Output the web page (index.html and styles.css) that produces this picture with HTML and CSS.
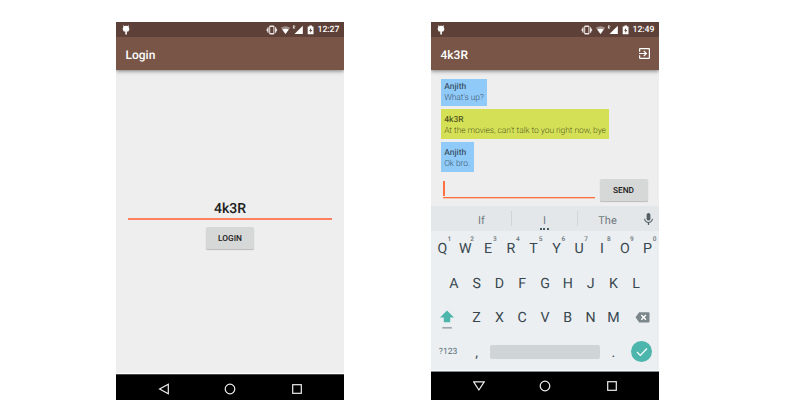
FILE: index.html
```html
<!DOCTYPE html>
<html lang="en">
<head>
<meta charset="utf-8">
<title>Chat</title>
<link rel="stylesheet" href="styles.css">
</head>
<body>
<svg width="0" height="0" class="defs">
  <symbol id="droid" viewBox="0 0 8 10"><path d="M1.200.2 2.300 1Q4 .4 5.700 1L6.800.2 7.100.5 6.500 1.800Q7.500 3 7.300 4.800L6.300 6.600H4.900V9.400H3.300V6.600H1.800L.8 4.800Q.5 3 1.500 1.800L.9.500Z" fill="#fff"/></symbol>
  <symbol id="status" viewBox="0 0 50 12">
    <g fill="#eee6e4"><rect x="3.200" y="1.500" width="5.200" height="9" rx="1"/><path d="M2.600 3.300V8.700H1.500V7.700L.2 6 1.500 4.300V3.300ZM9 3.300V8.700h1.100V7.700L11.400 6 10.100 4.300V3.300Z"/></g>
    <rect x="4.200" y="3" width="3.200" height="6" fill="#5d4037"/>
    <path d="M14.700 3.700Q19.500.7 24.300 3.700L19.500 10Z" fill="#a18f8a"/><path d="M16.300 5.500Q19.500 4 22.700 5.500L19.500 10Z" fill="#fff"/>
    <path d="M36.800 1.700V10H28.500Z" fill="#fff"/><path d="M27.400 4.700V1.700h1q1 .8 0 1.600h-1l1.500 1.400" fill="none" stroke="#fff" stroke-width=".7"/>
    <path d="M41.700 2.400h1.700V1.500h2.600v.9h1.500V10.300h-5.800Z" fill="#fff"/><path d="M45.200 3.700 43.100 6.700h1.300l-.3 2.200 2.200-3h-1.400Z" fill="#5d4037"/>
  </symbol>
</svg>
<main class="stage">
  <section class="phone">
    <div class="statusbar"><svg class="droid"><use href="#droid"/></svg><svg class="status"><use href="#status"/></svg><time>12:27</time></div>
    <header class="appbar"><h1>Login</h1></header>
    <div class="login">
      <div class="username">4k3R</div>
      <button class="btn">LOGIN</button>
    </div>
    <nav class="nav nav-low">
      <svg viewBox="0 0 12 12"><path d="M10.300 1.300V10.700L1.600 6Z"/></svg>
      <svg viewBox="0 0 12 12"><circle cx="6" cy="6" r="4.800"/></svg>
      <svg viewBox="0 0 12 12"><rect x="1.700" y="1.700" width="8.600" height="8.600"/></svg>
    </nav>
  </section>
  <section class="phone">
    <div class="statusbar"><svg class="droid"><use href="#droid"/></svg><svg class="status"><use href="#status"/></svg><time>12:49</time></div>
    <header class="appbar"><h1>4k3R</h1>
      <svg class="exit" viewBox="3 3 18 18"><path fill="#fff" d="M10.090 15.590 11.500 17l5-5-5-5-1.410 1.410L12.670 11H3v2h9.670l-2.580 2.590zM19 3H5c-1.110 0-2 .9-2 2v4h2V5h14v14H5v-4H3v4c0 1.100.89 2 2 2h14c1.100 0 2-.9 2-2V5c0-1.100-.9-2-2-2z"/></svg>
    </header>
    <div class="chat">
      <div class="msg first"><b>Anjith</b><p>What's up?</p></div>
      <div class="msg mine"><b>4k3R</b><p>At the movies, can't talk to you right now, bye</p></div>
      <div class="msg"><b>Anjith</b><p>Ok bro.</p></div>
      <div class="compose"><div class="field"><i class="caret"></i></div><button class="btn">SEND</button></div>
    </div>
    <div class="keyboard">
      <div class="suggest"><span>If</span><span class="mid">I<em></em></span><span>The</span>
        <svg class="mic" viewBox="5 2 14 19"><path fill="#546066" d="M12 14c1.660 0 3-1.340 3-3V5c0-1.660-1.340-3-3-3S9 3.340 9 5v6c0 1.660 1.340 3 3 3zm5.300-3c0 3-2.540 5.100-5.300 5.100S6.700 14 6.700 11H5c0 3.410 2.720 6.230 6 6.720V21h2v-3.280c3.280-.48 6-3.300 6-6.720h-1.700z"/></svg>
      </div>
      <div class="row"><kbd>Q<sup>1</sup></kbd><kbd>W<sup>2</sup></kbd><kbd>E<sup>3</sup></kbd><kbd>R<sup>4</sup></kbd><kbd>T<sup>5</sup></kbd><kbd>Y<sup>6</sup></kbd><kbd>U<sup>7</sup></kbd><kbd>I<sup>8</sup></kbd><kbd>O<sup>9</sup></kbd><kbd>P<sup>0</sup></kbd></div>
      <div class="row"><kbd>A</kbd><kbd>S</kbd><kbd>D</kbd><kbd>F</kbd><kbd>G</kbd><kbd>H</kbd><kbd>J</kbd><kbd>K</kbd><kbd>L</kbd></div>
      <div class="row">
        <span class="wide"><svg class="shift" viewBox="0 0 16 20"><path fill="#4db6ac" d="M8 .5 15 7.500H11.200V12.300H4.800V7.500H1Z"/><path fill="#8b979c" d="M3.300 17.200h9.600v1.300H3.300z"/></svg></span>
        <kbd>Z</kbd><kbd>X</kbd><kbd>C</kbd><kbd>V</kbd><kbd>B</kbd><kbd>N</kbd><kbd>M</kbd>
        <span class="wide"><svg class="back" viewBox="0 0 15 11"><path fill="#7b878c" d="M4.200.3H13.500q1 0 1 1V9.400q0 1-1 1H4.200L.5 5.350Z"/><path d="M6.300 2.900 10.900 7.700M10.900 2.900 6.300 7.700" stroke="#fff" stroke-width="1.400"/></svg></span>
      </div>
      <div class="row">
        <span class="wide sym">?123</span><kbd>,</kbd><span class="space"></span><kbd>.</kbd>
        <span class="wide"><span class="done"><svg viewBox="0 0 12 10"><path d="M1 5 4.300 8.300 11 1.500" fill="none" stroke="#fff" stroke-width="1.200"/></svg></span></span>
      </div>
    </div>
    <nav class="nav nav-kb">
      <svg viewBox="0 0 12 12"><path d="M.6 1.800H11.200L5.900 10Z"/></svg>
      <svg viewBox="0 0 12 12"><circle cx="6" cy="6" r="4.800"/></svg>
      <svg viewBox="0 0 12 12"><rect x="1.700" y="1.700" width="8.600" height="8.600"/></svg>
    </nav>
  </section>
</main>
</body>
</html>
```
FILE: styles.css
```css
* { box-sizing: border-box; }
body { margin: 0; background: #fff; font-family: Roboto, sans-serif; text-rendering: geometricPrecision; }
.defs { position: absolute; }
.stage { display: flex; gap: 87px; height: 400px; padding: 22px 0 0 116px; overflow: hidden; }
.phone { width: 228px; height: 378px; display: flex; flex-direction: column; background: #eee; }
.statusbar { height: 15px; background: #5d4037; display: flex; align-items: center; padding: 0 4.500px 0 6px; color: #fff; font-size: 8.700px; font-weight: 500; }
.droid { width: 8px; height: 10px; }
.status { width: 50px; height: 12px; margin-left: auto; }
.statusbar time { width: 23.500px; text-align: right; line-height: 15px; padding-top: 2px; white-space: nowrap; }
.appbar { height: 33px; background: #795548; display: flex; align-items: center; justify-content: space-between; padding: 0 9px 0 9.500px; box-shadow: 0 1px 4px rgba(0,0,0,.5); clip-path: inset(0 0 -6px 0); }
.appbar h1 { margin: 0; color: #fff; font-size: 12px; font-weight: 500; line-height: 34px; padding-top: 2px; }
.exit { width: 11px; height: 11px; }
.btn { width: 48px; height: 22px; border: 0; border-radius: 1.500px; padding: 2px 0 0; background: #d6d7d7; color: #202020; font: 500 8.300px/20px Roboto, sans-serif; text-rendering: geometricPrecision; box-shadow: 0 1px 1px rgba(0,0,0,.22); }
.login { flex: 1; display: flex; flex-direction: column; align-items: center; padding: 129px 12px 0; }
.username { width: 204px; height: 21px; border-bottom: 2px solid #ff8060; margin-bottom: 7px; padding-top: 1px; font-size: 14px; font-weight: 500; line-height: 19px; text-align: center; color: #202020; }
.nav { background: #000; display: flex; justify-content: center; align-items: center; gap: 54.500px; }
.nav svg { width: 12px; height: 12px; fill: none; stroke: #eee; stroke-width: 1.200; }
.nav-low { height: 26px; border-top: 1px solid #444a49; padding-top: 2px; box-shadow: 0 -1px #fcfcfc; }
.nav-kb { height: 29px; border-top: 1px solid #7f8a8d; box-shadow: 0 -1px #f8fafb; }
.chat { flex: 1; padding: 9px 9px 0 9.500px; display: flex; flex-direction: column; align-items: flex-start; gap: 3px; }
.msg { height: 30px; padding: 6px 3.700px 0; background: #90caf9; font-size: 8.500px; line-height: 11px; color: rgba(0,0,0,.66); white-space: nowrap; }
.msg.first { height: 27px; padding-top: 3px; }
.msg.mine { width: 168.500px; background: #d4e157; }
.msg b { display: block; font-weight: 500; color: rgba(0,0,0,.64); }
.msg p { margin: 0; font-weight: 300; letter-spacing: -.08px; }
.compose { display: flex; width: 208px; margin-top: 4px; gap: 4.500px; padding-left: 2.500px; }
.field { width: 152px; height: 19px; border-bottom: 1px solid #ff6e40; padding-top: 2px; box-shadow: 0 .5px #ff9a78; }
.caret { display: block; width: 1.500px; height: 15px; background: #ff7043; }
.keyboard { height: 165px; background: #eceff1; color: #37474f; }
.suggest { height: 25px; background: #e4e7e9; display: flex; align-items: center; padding-left: 21px; font-size: 11px; color: #6f7b80; }
.suggest span { width: 59px; text-align: center; line-height: 15px; height: 15px; padding-top: 2px; }
.suggest .mid { position: relative; width: 67px; border: solid #d0d5d7; border-width: 0 1px; }
.suggest em { position: absolute; left: 28px; top: 17px; width: 9px; height: 2px; background: repeating-linear-gradient(90deg, #455a64 0 2px, transparent 2px 3.500px); }
.mic { width: 9px; height: 12px; margin: 1px 0 0 6.500px; }
.row { height: 34.500px; display: flex; justify-content: center; align-items: center; }
kbd { position: relative; width: 22.800px; text-align: center; padding-top: 2px; font: 400 14.200px/32px Roboto, sans-serif; }
kbd sup { position: absolute; left: 16.500px; top: 5px; font-size: 6.500px; line-height: 7px; color: #657379; font-weight: 500; }
.wide { width: 34.200px; display: flex; align-items: center; justify-content: center; }
.shift { width: 16px; height: 20px; margin: 6px 3px 0 0; }
.back { width: 15px; height: 11px; margin-left: 2px; }
.sym { font-size: 8.600px; color: #546e7a; padding-top: 1px; }
.space { width: 110px; height: 14px; margin: 0 2px; border-radius: 2px; background: #cfd4d7; }
.done { width: 21px; height: 21px; border-radius: 50%; background: #4db6ac; display: flex; align-items: center; justify-content: center; }
.done svg { width: 12px; height: 10px; }
```
